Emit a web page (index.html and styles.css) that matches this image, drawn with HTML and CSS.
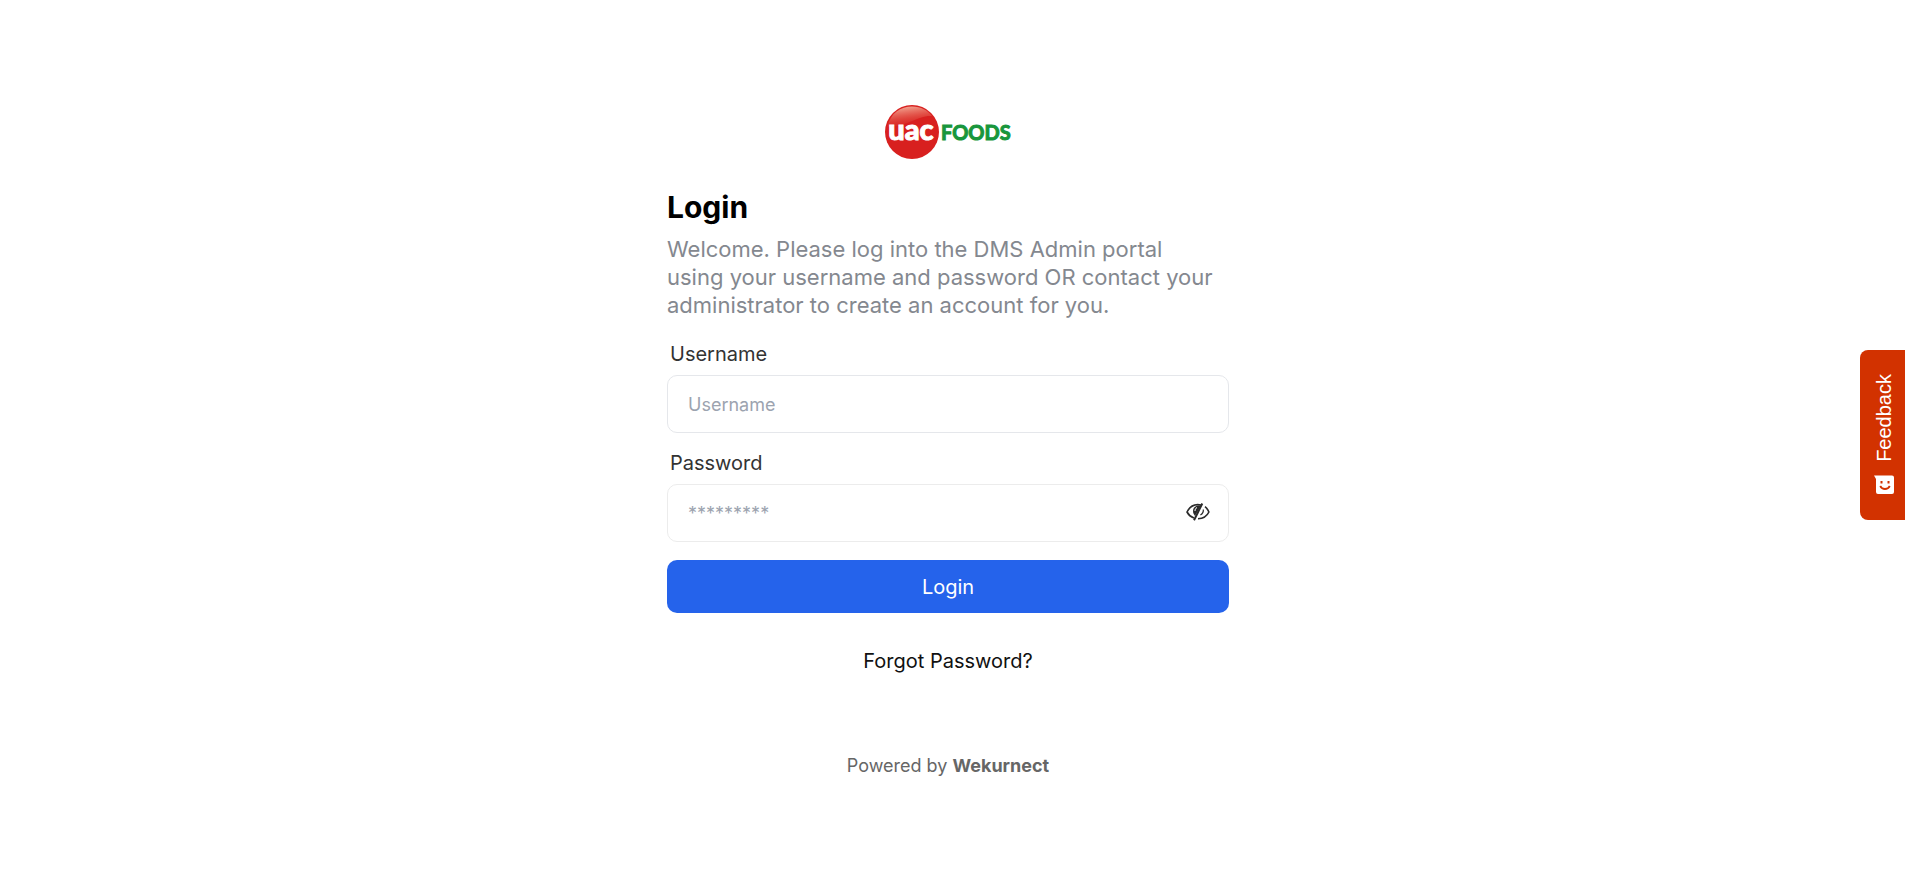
FILE: index.html
```html
<!DOCTYPE html>
<html lang="en">
<head>
<meta charset="utf-8">
<meta name="viewport" content="width=device-width, initial-scale=1">
<title>Login</title>
<link rel="stylesheet" href="styles.css">
</head>
<body>
<main class="page">
  <div class="panel">
    <svg class="logo" viewBox="0 0 128 56" role="img" aria-label="UAC Foods">
      <defs>
        <linearGradient id="gloss" x1="0.3" y1="0" x2="0.6" y2="1">
          <stop offset="0" stop-color="#fbd0b8" stop-opacity="0.8"/>
          <stop offset="1" stop-color="#e04030" stop-opacity="0.05"/>
        </linearGradient>
      </defs>
      <circle cx="28" cy="28" r="27" fill="#d8201f"/>
      <path d="M3.500 23C6 9 17 2.500 28 2.500c9 0 16 4 20 9.500-14-1-25 11-44.500 11z" fill="url(#gloss)"/>
      <text class="logo-mark" x="27" y="36" text-anchor="middle">uac</text>
      <text class="logo-word" x="57" y="36">FOODS</text>
    </svg>
    <h1 class="title">Login</h1>
    <p class="intro">Welcome. Please log into the DMS Admin portal using your username and password OR contact your administrator to create an account for you.</p>
    <form class="form">
      <div class="field">
        <label class="label" for="username">Username</label>
        <input class="input" id="username" type="text" placeholder="Username">
      </div>
      <div class="field">
        <label class="label" for="password">Password</label>
        <div class="password">
          <input class="input input-password" id="password" type="password" placeholder="*********">
          <button class="toggle" type="button" aria-label="Show password">
            <svg class="eye" viewBox="0 0 24 18" fill="none" stroke="#2b2b2b" stroke-width="1.600">
              <path d="M15 2C8 .5 3.500 4 1 9c1.500 2.800 3.800 4.900 7 6"/>
              <path d="M16.300 .5L8 17.300" stroke-width="2"/>
              <path d="M15 2.500C9 2 7 5 7 8c0 2 .8 3.500 2 5z" fill="#2b2b2b" stroke="none"/>
              <path d="M11 4.500C9.500 5.300 9 6.500 9 8" stroke="#fff" stroke-width="1"/>
              <path d="M19 3.600c1.700 1.300 3 3.200 3.900 5.400-2 4.300-5.900 6.600-10.900 6.700"/>
              <path d="M17.300 6.500c.3 2.500-.9 4.400-2.900 5.600" stroke-width="1.200"/>
            </svg>
          </button>
        </div>
      </div>
      <button class="submit" type="submit">Login</button>
    </form>
    <a class="forgot" href="#">Forgot Password?</a>
    <footer class="powered">Powered by <strong>Wekurnect</strong></footer>
  </div>
</main>
<button class="feedback" type="button">
  <svg class="smile" viewBox="0 0 20 20">
    <path d="M0 0.500h18a2 2 0 0 1 2 2V17a2 2 0 0 1-2 2H4a2 2 0 0 1-2-2V4z" fill="#fff"/>
    <path d="M6.200 11c2 4 7.600 4 9.600 0" fill="none" stroke="#d23200" stroke-width="1.800"/>
    <path d="M6.500 6h2v2.500h-2zM13.500 6h2v2.500h-2z" fill="#d23200"/>
  </svg>
  <span class="feedback-text">Feedback</span>
</button>
</body>
</html>
```
FILE: styles.css
```css
* { box-sizing: border-box; }
body {
  margin: 0;
  background: #fff;
  font-family: Inter, "Liberation Sans", sans-serif;
  color: #111;
}
.page {
  display: flex;
  justify-content: center;
  padding: 104px 25px 48px 16px;
}
.panel {
  display: flex;
  flex-direction: column;
  width: 100%;
  max-width: 562px;
}
.logo {
  width: 128px;
  height: 56px;
  align-self: center;
}
.logo-mark {
  font: 900 29px Lato, sans-serif;
  fill: #fff;
  stroke: #fff;
  stroke-width: 1px;
}
.logo-word {
  font: 700 20px Lato, sans-serif;
  fill: #18963c;
  stroke: #18963c;
  stroke-width: 1px;
}
.title {
  margin: 27px 0 8px;
  font-size: 30px;
  line-height: 40px;
  font-weight: 700;
  color: #000;
}
.intro {
  margin: 0 0 23px;
  padding-right: 6px;
  font-size: 22px;
  line-height: 28px;
  color: #84888f;
}
.form {
  display: flex;
  flex-direction: column;
  gap: 18px;
}
.field {
  display: flex;
  flex-direction: column;
  gap: 8px;
}
.label {
  padding-left: 3px;
  font-size: 20px;
  line-height: 25px;
  color: #333;
}
.input {
  width: 100%;
  height: 58px;
  padding: 0 20px;
  border: 1px solid #e5e7eb;
  border-radius: 10px;
  background: #fff;
  font: inherit;
  font-size: 18px;
}
.input::placeholder { color: #9ca3af; }
.input-password {
  padding-right: 60px;
  border-color: #ececec;
}
.password { position: relative; }
.toggle {
  position: absolute;
  top: 0;
  right: 19px;
  height: 56px;
  padding: 0;
  border: 0;
  background: none;
}
.eye {
  display: block;
  width: 24px;
  height: 18px;
}
.submit {
  height: 53px;
  border: 0;
  border-radius: 10px;
  background: #2563eb;
  color: #fff;
  font: inherit;
  font-size: 20px;
}
.forgot {
  align-self: center;
  margin-top: 36px;
  font-size: 20px;
  line-height: 24px;
  color: #111;
  text-decoration: none;
}
.powered {
  margin-top: 81px;
  font-size: 18px;
  line-height: 24px;
  text-align: center;
  color: #666;
}
.feedback {
  position: fixed;
  top: 350px;
  right: 0;
  display: flex;
  flex-direction: column-reverse;
  align-items: center;
  gap: 13px;
  width: 45px;
  padding: 24px 0 25px 3px;
  border: 0;
  border-radius: 8px 0 0 8px;
  background: #d23200;
  color: #fff;
  font: 20px "Liberation Sans", Arial, sans-serif;
}
.feedback-text {
  writing-mode: vertical-rl;
  transform: rotate(180deg);
}
.smile {
  width: 20px;
  height: 20px;
}
```
